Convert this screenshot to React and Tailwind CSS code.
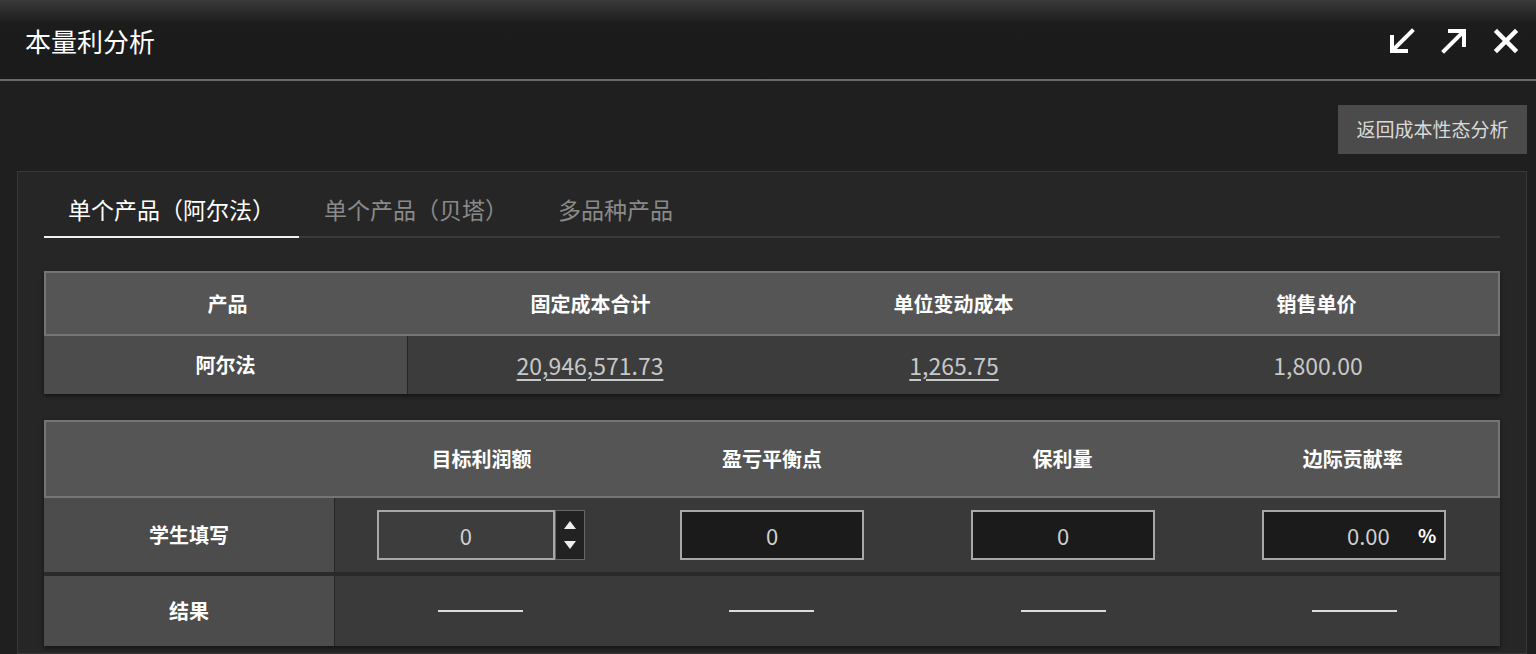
import React from "react";

const FONT = { fontFamily: '"Noto Sans CJK SC", "Noto Sans", sans-serif' };

const IconShrink = () => (
  <svg width="28" height="28" viewBox="0 0 28 28" fill="none" stroke="#fff" strokeWidth="4" strokeLinecap="square">
    <path d="M24 4 L6 22" />
    <path d="M4 10 V24 H18" />
  </svg>
);

const IconExpand = () => (
  <svg width="28" height="28" viewBox="0 0 28 28" fill="none" stroke="#fff" strokeWidth="4" strokeLinecap="square">
    <path d="M4 24 L22 6" />
    <path d="M10 4 H24 V18" />
  </svg>
);

const IconClose = () => (
  <svg width="28" height="28" viewBox="0 0 28 28" fill="none" stroke="#fff" strokeWidth="4.5" strokeLinecap="square">
    <path d="M5 5 L23 23" />
    <path d="M23 5 L5 23" />
  </svg>
);

const tabs = ["单个产品（阿尔法）", "单个产品（贝塔）", "多品种产品"];

const Dash = () => <div className="w-[85px] h-[2px] bg-[#dcdcdc]" />;

const BoxInput = ({ value, suffix }) => (
  <div className="relative w-[184px] h-[50px] bg-[#1b1b1b] border-2 border-[#a8a8a8] flex items-center justify-center text-[22px] text-[#d0d0d0]">
    {suffix ? (
      <>
        <span className="ml-[28px]">{value}</span>
        <span className="absolute right-[8px] font-bold text-[19px] text-white">{suffix}</span>
      </>
    ) : (
      value
    )}
  </div>
);

const SpinInput = () => (
  <div className="flex h-[50px]">
    <div className="w-[178px] h-full bg-[#3d3d3d] border-2 border-[#a8a8a8] flex items-center justify-center text-[22px] text-[#d0d0d0]">
      0
    </div>
    <div className="w-[30px] h-full bg-[#222] border border-[#666] flex flex-col items-center justify-around py-[4px]">
      <svg width="12" height="8" viewBox="0 0 12 8">
        <path d="M6 0 L12 8 H0 Z" fill="#eee" />
      </svg>
      <svg width="12" height="8" viewBox="0 0 12 8">
        <path d="M0 0 H12 L6 8 Z" fill="#eee" />
      </svg>
    </div>
  </div>
);

export default function App() {
  return (
    <div className="w-[1536px] h-[654px] overflow-hidden bg-[#1f1f1f] flex flex-col" style={FONT}>
      {/* title bar */}
      <div className="h-[79px] shrink-0 flex items-center pl-[25px] pr-[16px] bg-gradient-to-b from-[#3a3a3a] via-[#1c1c1c] via-30% to-[#1b1b1b]">
        <div className="text-[26px] text-white pt-[2px]">本量利分析</div>
        <div className="ml-auto flex items-center gap-[24px] pt-[2px]">
          <IconShrink />
          <IconExpand />
          <IconClose />
        </div>
      </div>
      <div className="h-[2px] shrink-0 bg-[#6a6a6a]" />

      {/* body */}
      <div className="flex-1 flex flex-col pt-[24px] pr-[9px]">
        <div className="flex justify-end">
          <button className="w-[189px] h-[49px] bg-[#4b4b4b] text-[#dadada] text-[19px]">
            返回成本性态分析
          </button>
        </div>

        <div className="mt-[17px] ml-[17px] flex-1 bg-[#262626] border border-[#383838] px-[26px] pt-[10px]">
          {/* tabs */}
          <div className="flex border-b-2 border-[#3a3a3a]">
            {tabs.map((t, i) => (
              <div
                key={t}
                className={
                  i === 0
                    ? "h-[56px] -mb-[2px] px-[24px] flex items-center text-[23px] text-white border-b-2 border-[#f0f0f0]"
                    : "h-[56px] -mb-[2px] px-[25px] flex items-center text-[23px] text-[#8a8a8a] border-b-2 border-transparent"
                }
              >
                {t}
              </div>
            ))}
          </div>

          {/* table 1 */}
          <div className="mt-[33px] shadow-[0_2px_4px_rgba(0,0,0,0.5)]">
            <div className="grid grid-cols-4 h-[65px] bg-[#555] border-2 border-[#757575] text-[20px] font-bold text-white">
              {["产品", "固定成本合计", "单位变动成本", "销售单价"].map((h) => (
                <div key={h} className="flex items-center justify-center">
                  {h}
                </div>
              ))}
            </div>
            <div className="grid grid-cols-4 h-[58px] text-[23px]">
              <div className="flex items-center justify-center bg-[#4c4c4c] text-white font-bold text-[20px] border-r border-[#262626]">
                阿尔法
              </div>
              <div className="flex items-center justify-center bg-[#3c3c3c] text-[#c8c8c8] underline underline-offset-4">
                20,946,571.73
              </div>
              <div className="flex items-center justify-center bg-[#3c3c3c] text-[#c8c8c8] underline underline-offset-4">
                1,265.75
              </div>
              <div className="flex items-center justify-center bg-[#3c3c3c] text-[#c8c8c8]">
                1,800.00
              </div>
            </div>
          </div>

          {/* table 2 */}
          <div className="mt-[26px] shadow-[0_2px_4px_rgba(0,0,0,0.5)]">
            <div className="grid grid-cols-5 h-[78px] bg-[#555] border-2 border-[#757575] text-[20px] font-bold text-white">
              {["", "目标利润额", "盈亏平衡点", "保利量", "边际贡献率"].map((h, i) => (
                <div key={i} className="flex items-center justify-center">
                  {h}
                </div>
              ))}
            </div>
            <div className="grid grid-cols-5 h-[74px] bg-[#393939]">
              <div className="flex items-center justify-center bg-[#4c4c4c] text-white font-bold text-[20px] border-r border-[#262626]">
                学生填写
              </div>
              <div className="flex items-center justify-center">
                <SpinInput />
              </div>
              <div className="flex items-center justify-center">
                <BoxInput value="0" />
              </div>
              <div className="flex items-center justify-center">
                <BoxInput value="0" />
              </div>
              <div className="flex items-center justify-center">
                <BoxInput value="0.00" suffix="%" />
              </div>
            </div>
            <div className="h-[4px] bg-[#2a2a2a]" />
            <div className="grid grid-cols-5 h-[70px] bg-[#3a3a3a]">
              <div className="flex items-center justify-center bg-[#4c4c4c] text-white font-bold text-[20px] border-r border-[#262626]">
                结果
              </div>
              {[0, 1, 2, 3].map((k) => (
                <div key={k} className="flex items-center justify-center">
                  <Dash />
                </div>
              ))}
            </div>
          </div>
        </div>
      </div>
    </div>
  );
}
